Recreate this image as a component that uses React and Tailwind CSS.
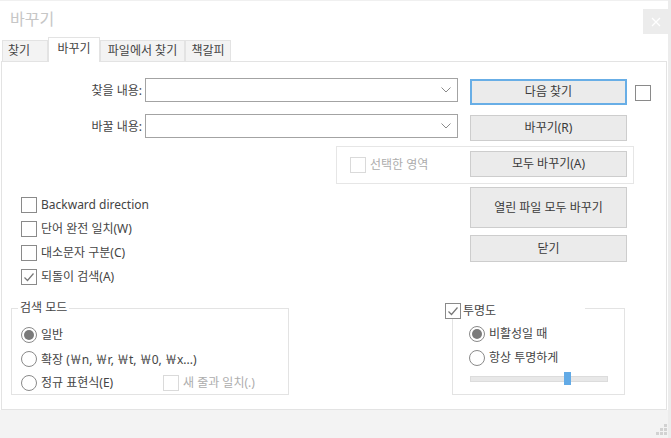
import React from "react";

const FONT = { fontFamily: '"Noto Sans", "Noto Sans CJK KR", sans-serif' };
const CJK = { fontFamily: '"Noto Sans CJK KR", sans-serif' };

const CheckBox = ({ checked = false, disabled = false }) => (
  <span
    className={`flex h-[16px] w-[16px] shrink-0 items-center justify-center border bg-white ${
      disabled ? "border-[#dadada]" : "border-[#8a8a8a]"
    }`}
  >
    {checked && (
      <svg width="14" height="14" viewBox="0 0 14 14">
        <path d="M2.5 7.5 L5.5 10.5 L11.5 3.5" fill="none" stroke="#777" strokeWidth="1.2" />
      </svg>
    )}
  </span>
);

const Radio = ({ checked = false }) => (
  <span className="flex h-[16px] w-[16px] shrink-0 items-center justify-center rounded-full border border-[#8a8a8a] bg-white">
    {checked && <span className="h-[10px] w-[10px] rounded-full bg-[#7a7a7a]" />}
  </span>
);

const Combo = () => (
  <div className="flex h-[24px] w-[313px] items-center justify-end border border-[#a3a3a3] bg-white pr-[6px]">
    <svg width="10" height="6" viewBox="0 0 10 6">
      <path d="M0.5 0.5 L5 5 L9.5 0.5" fill="none" stroke="#8a8a8a" strokeWidth="1" />
    </svg>
  </div>
);

const Button = ({ children, className = "", focused = false }) => (
  <div
    className={`flex w-[157px] shrink-0 items-center justify-center bg-[#ebebeb] text-[#3a3a3a] ${
      focused ? "border-2 border-[#68aee6]" : "border border-[#cdcdcd]"
    } ${className}`}
  >
    {children}
  </div>
);

const Option = ({ children, checked }) => (
  <div className="flex h-[16px] items-center gap-[4px]">
    <CheckBox checked={checked} />
    <span className="leading-[16px]">{children}</span>
  </div>
);

const Won = () => <span style={CJK}>￦</span>;

export default function App() {
  return (
    <div className="flex h-[438px] w-[671px] overflow-hidden bg-white text-[12px] text-[#444]" style={FONT}>
      <div className="flex w-[668px] flex-col">
        {/* title bar */}
        <div className="flex h-[38px] shrink-0 items-start justify-between border-t border-[#f0f0f0]">
          <div className="pl-[10px] pt-[7px] text-[16px] leading-[22px] text-[#c6c6c6]">바꾸기</div>
          <div className="mt-[8px] flex h-[25px] w-[25px] items-center justify-center bg-[#ececec]">
            <svg width="10" height="10" viewBox="0 0 10 10">
              <path d="M1 1 L9 9 M9 1 L1 9" stroke="#fff" strokeWidth="1.2" />
            </svg>
          </div>
        </div>

        {/* tabs */}
        <div className="flex h-[23px] shrink-0 items-end pl-[2px]">
          <div className="flex h-[21px] w-[46px] items-center border border-b-0 border-[#e3e3e3] bg-[#f3f3f3] pl-[5px]">찾기</div>
          <div className="relative z-10 -mb-[1px] flex h-[25px] w-[52px] items-start justify-center border border-b-0 border-[#e3e3e3] bg-white pt-[2px]">
            바꾸기
          </div>
          <div className="flex h-[21px] w-[85px] items-center justify-center border border-b-0 border-[#e3e3e3] bg-[#f3f3f3]">
            파일에서 찾기
          </div>
          <div className="flex h-[21px] w-[46px] items-center justify-center border border-b-0 border-[#e3e3e3] bg-[#f3f3f3]">
            책갈피
          </div>
        </div>

        {/* panel */}
        <div className="ml-[1px] h-[349px] w-[666px] shrink-0 border border-[#e3e3e3] bg-white pt-[16px]">
          <div className="flex items-start">
            <div className="h-[25px] w-[140px] text-right leading-[25px]">찾을 내용:</div>
            <div className="ml-[3px]">
              <Combo />
            </div>
            <Button focused className="ml-[12px] mt-[1px] h-[26px]">다음 찾기</Button>
            <div className="ml-[8px] mt-[7px]">
              <CheckBox />
            </div>
          </div>

          <div className="mt-[9px] flex items-start">
            <div className="h-[25px] w-[140px] text-right leading-[25px]">바꿀 내용:</div>
            <div className="ml-[3px]">
              <Combo />
            </div>
            <Button className="ml-[12px] mt-[1px] h-[26px]">바꾸기(R)</Button>
          </div>

          <div className="ml-[334px] mt-[5px] flex h-[38px] w-[298px] items-start border border-[#e6e6e6]">
            <div className="flex w-[133px] items-center gap-[4px] pl-[13px] pt-[10px] text-[#adadad]">
              <CheckBox disabled />
              <span className="leading-[16px]">선택한 영역</span>
            </div>
            <Button className="mt-[4px] h-[26px]">모두 바꾸기(A)</Button>
          </div>

          <div className="mt-[3px] flex h-[121px]">
            <div className="flex w-[468px] flex-col gap-[8px] pl-[19px] pt-[10px]">
              <Option>Backward direction</Option>
              <Option>단어 완전 일치(W)</Option>
              <Option>대소문자 구분(C)</Option>
              <Option checked>되돌이 검색(A)</Option>
            </div>
            <div className="flex flex-col">
              <Button className="h-[41px]">열린 파일 모두 바꾸기</Button>
              <Button className="mt-[7px] h-[27px]">닫기</Button>
            </div>
          </div>

          <div className="flex items-start">
            {/* search mode */}
            <div className="relative ml-[9px] flex h-[87px] w-[278px] flex-col gap-[8px] border border-[#e3e3e3] pl-[9px] pt-[18px]">
              <span className="absolute -top-[9px] left-[6px] bg-white px-[2px] leading-[16px]">검색 모드</span>
              <div className="flex h-[16px] items-center gap-[4px]">
                <Radio checked />
                <span>일반</span>
              </div>
              <div className="flex h-[16px] items-center gap-[4px]">
                <Radio />
                <span>
                  확장 (<Won />n, <Won />r, <Won />t, <Won />0, <Won />x...)
                </span>
              </div>
              <div className="flex h-[16px] items-center">
                <div className="flex w-[142px] items-center gap-[4px]">
                  <Radio />
                  <span>정규 표현식(E)</span>
                </div>
                <div className="flex items-center gap-[4px] text-[#adadad]">
                  <CheckBox disabled />
                  <span>새 줄과 일치(.)</span>
                </div>
              </div>
            </div>

            {/* transparency */}
            <div className="relative ml-[163px] flex h-[87px] w-[173px] flex-col gap-[8px] border border-[#e3e3e3] pl-[16px] pt-[17px]">
              <div className="absolute -left-[8px] -top-[7px] flex h-[17px] w-[140px] items-center gap-[2px] bg-white">
                <CheckBox checked />
                <span className="leading-[16px]">투명도</span>
              </div>
              <div className="flex h-[16px] items-center gap-[4px]">
                <Radio checked />
                <span>비활성일 때</span>
              </div>
              <div className="flex h-[16px] items-center gap-[4px]">
                <Radio />
                <span>항상 투명하게</span>
              </div>
              <div className="relative ml-[1px] mt-[2px] h-[6px] w-[138px] border border-[#dcdcdc] bg-[#e8e8e8]">
                <span className="absolute -top-[5px] left-[93px] h-[13px] w-[7px] bg-[#62aae6]" />
              </div>
            </div>
          </div>
        </div>

        {/* status area */}
        <div className="relative flex-1 bg-[#f3f3f3]">
          <svg className="absolute bottom-[2px] right-[0px]" width="12" height="12" viewBox="0 0 12 12">
            <rect x="8" y="0" width="3" height="3" fill="#d2d2d2" />
            <rect x="4" y="4" width="3" height="3" fill="#d2d2d2" />
            <rect x="8" y="4" width="3" height="3" fill="#d2d2d2" />
            <rect x="0" y="8" width="3" height="3" fill="#d2d2d2" />
            <rect x="4" y="8" width="3" height="3" fill="#d2d2d2" />
            <rect x="8" y="8" width="3" height="3" fill="#d2d2d2" />
          </svg>
        </div>
      </div>
      <div className="w-[3px] bg-[#ececec]" />
    </div>
  );
}
